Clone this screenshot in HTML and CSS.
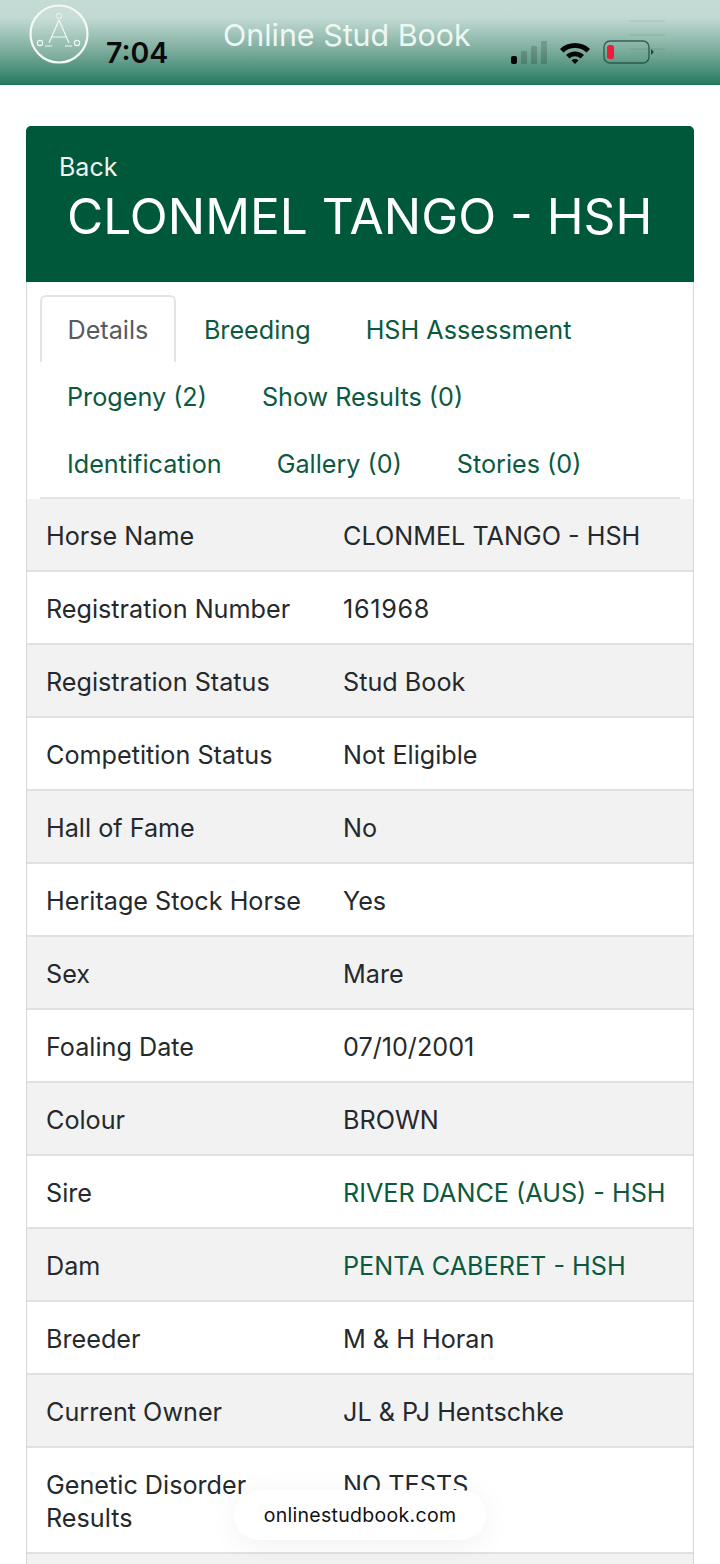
FILE: index.html
```html
<!DOCTYPE html>
<html>
<head>
  <meta charset="UTF-8">
  <meta name="viewport" content="width=device-width, initial-scale=1.0">
  <title>Online Stud Book</title>
  <link rel="stylesheet" href="styles.css">
</head>
<body>
  <nav class="navbar">
    <svg class="logo" viewBox="0 0 60 60" width="60" height="60">
      <circle cx="30" cy="30" r="28.500" fill="#ffffff" fill-opacity=".12" stroke="#f4f9f6" stroke-width="2.200"/>
      <circle cx="30" cy="12" r="2.600" fill="none" stroke="#e4efe9" stroke-width="1.200"/>
      <path d="M30 16 L20 39 M30 16 L40 39 M23 33 H37" fill="none" stroke="#f2f8f5" stroke-width="1.200"/>
      <circle cx="11" cy="39" r="2.600" fill="none" stroke="#f2f8f5" stroke-width="1.200"/>
      <circle cx="48" cy="39" r="2.600" fill="none" stroke="#f2f8f5" stroke-width="1.200"/>
      <path d="M16 42 H23 M36 42 H43" stroke="#f2f8f5" stroke-width="1.200"/>
    </svg>
    <span class="brand">Online Stud Book</span>
    <div class="burger"><i></i><i></i><i></i></div>
    <span class="clock">7:04</span>
    <div class="status">
      <svg viewBox="0 0 36 23" width="36" height="23">
        <rect x="0" y="15" width="6" height="8" rx="2" fill="#050505"/>
        <rect x="10" y="10" width="6" height="13" rx="1" fill="#000" opacity=".16"/>
        <rect x="20" y="5" width="6" height="18" rx="1" fill="#000" opacity=".16"/>
        <rect x="30" y="0" width="6" height="23" rx="1" fill="#000" opacity=".16"/>
      </svg>
      <svg viewBox="0 0 32 23" width="32" height="23">
        <path d="M1 8 A22 22 0 0 1 31 8 L27.500 11.500 A17 17 0 0 0 4.500 11.500 Z" fill="#050505"/>
        <path d="M7 14 A13 13 0 0 1 25 14 L21.500 17.500 A8 8 0 0 0 10.500 17.500 Z" fill="#050505"/>
        <path d="M12.500 19.500 A5 5 0 0 1 19.500 19.500 L16 23 Z" fill="#050505"/>
      </svg>
      <svg viewBox="0 0 52 24" width="52" height="24">
        <rect x="1" y="1" width="45" height="22" rx="6" fill="none" stroke="#1e4a3a" stroke-width="1.400" opacity=".8"/>
        <rect x="4" y="5" width="7" height="14" rx="2.500" fill="#ee1c36"/>
        <path d="M48 9 L51 12 L48 15 Z" fill="#1e4a3a"/>
      </svg>
    </div>
  </nav>

  <div class="card">
    <div class="card-head">
      <a class="back">Back</a>
      <h1 class="horse-title">CLONMEL TANGO - HSH</h1>
    </div>

    <ul class="tabs">
      <li class="tab active">Details</li>
      <li class="tab">Breeding</li>
      <li class="tab">HSH Assessment</li>
      <li class="tab">Progeny (2)</li>
      <li class="tab">Show Results (0)</li>
      <li class="tab">Identification</li>
      <li class="tab">Gallery (0)</li>
      <li class="tab">Stories (0)</li>
    </ul>

    <div class="rows">
      <div class="row"><span class="label">Horse Name</span><span>CLONMEL TANGO - HSH</span></div>
      <div class="row"><span class="label">Registration Number</span><span class="digits">161968</span></div>
      <div class="row"><span class="label">Registration Status</span><span>Stud Book</span></div>
      <div class="row"><span class="label">Competition Status</span><span>Not Eligible</span></div>
      <div class="row"><span class="label">Hall of Fame</span><span>No</span></div>
      <div class="row"><span class="label">Heritage Stock Horse</span><span>Yes</span></div>
      <div class="row"><span class="label">Sex</span><span>Mare</span></div>
      <div class="row"><span class="label">Foaling Date</span><span>07/10/2001</span></div>
      <div class="row"><span class="label">Colour</span><span>BROWN</span></div>
      <div class="row"><span class="label">Sire</span><a class="link">RIVER DANCE (AUS) - HSH</a></div>
      <div class="row"><span class="label">Dam</span><a class="link">PENTA CABERET - HSH</a></div>
      <div class="row"><span class="label">Breeder</span><span>M &amp; H Horan</span></div>
      <div class="row"><span class="label">Current Owner</span><span>JL &amp; PJ Hentschke</span></div>
      <div class="row"><span class="label">Genetic Disorder Results</span><span>NO TESTS</span></div>
      <div class="row"><span class="label">&nbsp;</span><span></span></div>
    </div>
  </div>

  <div class="url-pill">onlinestudbook.com</div>
</body>
</html>
```

FILE: styles.css
```css
* {
  padding: 0;
  margin: 0;
  box-sizing: border-box;
}
html, body {
  height: 1564px;
  overflow: hidden;
}
body {
  position: relative;
  font-family: Inter, "Liberation Sans", sans-serif;
  font-size: 25.2px;
  line-height: 33px;
  color: #26292c;
  background: #fff;
}
.navbar {
  position: relative;
  display: flex;
  align-items: flex-start;
  height: 85px;
  padding: 4px 0 0 29px;
  background: linear-gradient(#c5dcd5 0, #c0d9d2 22%, #7fae9f 58%, #2f7f66 96%, #1f7158 100%);
}
.brand {
  margin: 12px 0 0 134px;
  font-size: 30.4px;
  line-height: 38px;
  color: #eef7f3;
}
.burger {
  display: flex;
  flex-direction: column;
  gap: 12px;
  width: 36px;
  margin: 16px 0 0 158px;
}
.burger i {
  display: block;
  height: 2px;
  background: #000;
  opacity: .05;
}
.clock {
  position: absolute;
  left: 106px;
  top: 36px;
  font-size: 28.5px;
  line-height: 34px;
  font-weight: 600;
  color: #0a0a0a;
}
.status {
  position: absolute;
  left: 511px;
  top: 40px;
  display: flex;
  gap: 12px;
  align-items: center;
}
.card {
  margin: 41px 26px 0;
  border: 1px solid #d5d9d7;
  border-radius: 5px;
}
.card-head {
  height: 156px;
  margin: -1px -1px 0;
  padding: 25px 33px 0;
  background: #00583a;
  border-radius: 5px 5px 0 0;
  color: #eef5f2;
}
.back {
  display: block;
  font-size: 25px;
  line-height: 32px;
}
.horse-title {
  margin: 3px 0 0 8px;
  font-size: 49.6px;
  line-height: 60px;
  font-weight: 400;
  color: #fff;
  white-space: nowrap;
}
.tabs {
  display: flex;
  flex-wrap: wrap;
  align-content: flex-start;
  list-style: none;
  height: 217px;
  margin: 0 13px 0 12.5px;
  padding-top: 13px;
  border-bottom: 2px solid #e3e5e4;
}
.tab {
  height: 67px;
  padding: 19px 27.5px;
  color: #0b5a40;
  white-space: nowrap;
}
.tab.active {
  color: #555b5f;
  border: 2px solid #e3e5e4;
  border-bottom: 0;
  border-radius: 6px 6px 0 0;
  padding: 17px 26px;
}
.tab:nth-child(3) {
  margin-right: 60px;
}
.tab:nth-child(5) {
  margin-right: 100px;
}
.row {
  display: grid;
  grid-template-columns: 297px 1fr;
  padding: 20.5px 19px 17.5px;
  min-height: 73px;
  border-bottom: 2px solid #dfe2e1;
}
.row:nth-child(odd) {
  background: #f2f2f3;
}
.label {
  padding-right: 40px;
}
.digits {
  letter-spacing: .7px;
}
.link {
  color: #0b5a40;
}
.url-pill {
  position: absolute;
  left: 234px;
  top: 1490px;
  width: 252px;
  height: 50px;
  border-radius: 25px;
  background: #fff;
  box-shadow: 0 4px 30px rgba(0, 0, 0, .06);
  font-size: 19.5px;
  line-height: 50px;
  letter-spacing: .3px;
  text-align: center;
  color: #111;
}
```
